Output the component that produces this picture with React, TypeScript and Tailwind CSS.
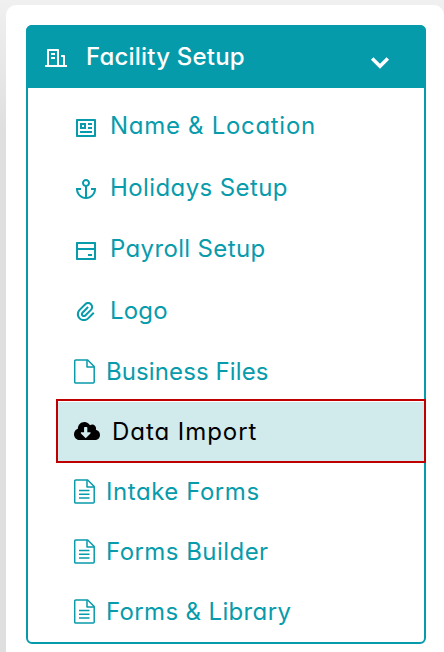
import { ReactNode } from 'react';
import { FaCloudDownloadAlt } from 'react-icons/fa';
import { RiAnchorLine, RiAttachment2, RiBankCardLine, RiBuildingLine, RiProfileLine } from 'react-icons/ri';

interface MenuItem {
  label: string;
  icon: ReactNode;
  row: string; // row height and left padding
  text: string; // gap to the icon and tracking
  active?: boolean;
}

function FileIcon({ lines = false }: { lines?: boolean }) {
  return (
    <svg width="21" height="25" viewBox="0 0 21 25" fill="none" stroke="currentColor" strokeWidth="1.5" strokeLinejoin="round">
      <path d="M1.700 1h12l6.500 6.500v15.500a1 1 0 0 1-1 1H1.700a1 1 0 0 1-1-1V2a1 1 0 0 1 1-1z" />
      <path d="M13 1v7h7" />
      {lines && <path d="M5 11.500h10.500M5 15.200h10.500M5 19h10.500" />}
    </svg>
  );
}

const items: MenuItem[] = [
  { label: 'Name & Location', icon: <RiProfileLine size={24} className="relative top-0.5" />, row: 'h-[62px] pl-[46px]', text: 'ml-3 tracking-[0.7px]' },
  { label: 'Holidays Setup', icon: <RiAnchorLine size={24} className="relative top-px" />, row: 'h-[61px] pl-[46px]', text: 'ml-3 mt-px tracking-[0.4px]' },
  { label: 'Payroll Setup', icon: <RiBankCardLine size={24} className="relative top-0.5" />, row: 'h-[62px] pl-[46px]', text: 'ml-3 tracking-[0.35px]' },
  { label: 'Logo', icon: <RiAttachment2 size={24} className="relative top-px" />, row: 'h-[61px] pl-[46px]', text: 'ml-3 mt-px tracking-[0.2px]' },
  { label: 'Business Files', icon: <FileIcon />, row: 'h-[58px] pt-0.5 pl-[46px]', text: 'ml-[11px] mt-0.5 tracking-[0.1px]' },
  { label: 'Data Import', icon: <FaCloudDownloadAlt size={26} />, row: 'h-16 pl-4', text: 'ml-3 mt-px tracking-[0.95px]', active: true },
  { label: 'Intake Forms', icon: <FileIcon lines />, row: 'h-[59px] pb-0.5 pl-[46px]', text: 'ml-[11px] tracking-[0.55px]' },
  { label: 'Forms Builder', icon: <FileIcon lines />, row: 'h-[60px] pb-px pl-[46px]', text: 'ml-[11px] mt-px tracking-[0.45px]' },
  { label: 'Forms & Library', icon: <FileIcon lines />, row: 'h-[60px] pb-px pl-[46px]', text: 'ml-[11px] mt-px tracking-[0.35px]' },
];

function MenuRow({ label, icon, row, text, active }: MenuItem) {
  return (
    <li
      className={`flex items-center ${row} ${
        active
          ? 'ml-7 -mr-0.5 border-2 border-[#c00000] bg-[#d1eaec] text-black shadow-[inset_0_1px_0_#fff]'
          : 'text-[#089bab]'
      }`}
    >
      {icon}
      <span className={`whitespace-nowrap ${text}`}>{label}</span>
    </li>
  );
}

export default function App() {
  return (
    <div className="h-[652px] w-[444px] overflow-hidden bg-linear-to-b from-[#f0f0f0] to-[#dfdfdf] to-20% pt-[5px] pl-1.5 font-['Inter',sans-serif] text-2xl leading-none [font-feature-settings:'cv11']">
      <div className="h-[660px] rounded-[10px] bg-white pt-5 pl-5">
        <div className="h-[619px] w-[400px] rounded-md border-2 border-[#059bab]">
          <button className="-mx-0.5 -mt-0.5 flex h-[63px] w-[400px] items-center rounded-t-md bg-[#059bab] pl-[18px] text-white">
            <RiBuildingLine size={24} className="relative top-px" />
            <span className="mt-px ml-[18px] font-medium whitespace-nowrap tracking-[0.2px]">Facility Setup</span>
            <svg className="relative top-1.5 mr-9 ml-auto" width="20" height="14" viewBox="0 0 20 14" fill="none" stroke="currentColor" strokeWidth="3.5">
              <path d="M2.200 2.500 10 10.300l7.800-7.800" />
            </svg>
          </button>
          <ul className="pt-[7px]">
            {items.map((item) => (
              <MenuRow key={item.label} {...item} />
            ))}
          </ul>
        </div>
      </div>
    </div>
  );
}
